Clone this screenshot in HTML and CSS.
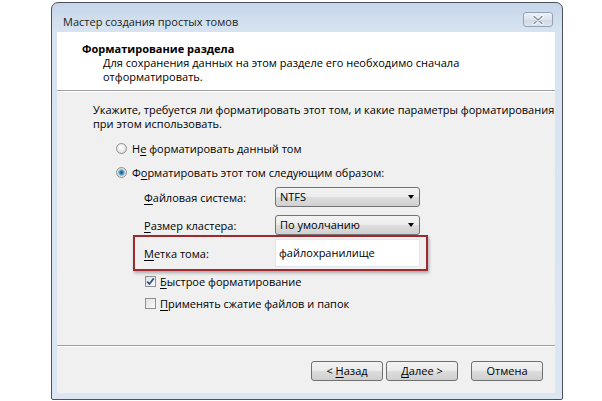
FILE: index.html
```html
<!DOCTYPE html>
<html lang="ru">
<head>
<meta charset="utf-8">
<title>Мастер создания простых томов</title>
<link rel="stylesheet" href="styles.css">
</head>
<body>
<div class="window">
  <div class="titlebar">
    <span class="title">Мастер создания простых томов</span>
    <span class="close">
      <svg width="14" height="10" viewBox="0 0 14 10"><path d="M3 1.5 L11 8.5 M11 1.5 L3 8.5" stroke="#fff" stroke-width="3.4" stroke-linecap="round"/><path d="M3 1.5 L11 8.5 M11 1.5 L3 8.5" stroke="#8391a3" stroke-width="1.6" stroke-linecap="round"/></svg>
    </span>
  </div>
  <div class="client">
    <div class="header">
      <div class="h-title">Форматирование раздела</div>
      <div class="h-desc">Для сохранения данных на этом разделе его необходимо сначала<br>отформатировать.</div>
    </div>
    <div class="content">
      <p class="intro">Укажите, требуется ли форматировать этот том, и какие параметры форматирования<br>при этом использовать.</p>
      <div class="opt-row first"><span class="radio"></span><span>Н<u>е</u> форматировать данный том</span></div>
      <div class="opt-row"><span class="radio checked"></span><span>Ф<u>о</u>рматировать этот том следующим образом:</span></div>
      <div class="form">
        <div class="frow">
          <span class="flabel"><u>Ф</u>айловая система:</span>
          <div class="combo">NTFS<span class="arrow"></span></div>
        </div>
        <div class="frow">
          <span class="flabel"><u>Р</u>азмер кластера:</span>
          <div class="combo">По умолчанию<span class="arrow"></span></div>
        </div>
        <div class="frow highlight">
          <span class="flabel"><u>М</u>етка тома:</span>
          <div class="input">файлохранилище</div>
        </div>
        <div class="chk-row first">
          <span class="check"><svg width="9" height="9" viewBox="0 0 9 9"><path d="M1.2 4.6 L3.4 7 L7.8 1.4" fill="none" stroke="#2c4f86" stroke-width="1.7"/></svg></span>
          <span><u>Б</u>ыстрое форматирование</span>
        </div>
        <div class="chk-row">
          <span class="check"></span>
          <span><u>П</u>рименять сжатие файлов и папок</span>
        </div>
      </div>
    </div>
    <div class="footer">
      <span class="btn">&lt; <u>Н</u>азад</span>
      <span class="btn"><u>Д</u>алее &gt;</span>
      <span class="btn cancel">Отмена</span>
    </div>
  </div>
</div>
</body>
</html>
```
FILE: styles.css
```css
* { box-sizing: border-box; }

body {
  margin: 0;
  background: #ffffff;
  font-family: "Open Sans", "Noto Sans", sans-serif;
  font-size: 11px;
  color: #000;
}

u { text-decoration: underline; text-underline-offset: 2px; text-decoration-thickness: 1px; }

.window {
  margin: 2px 0 0 51px;
  width: 512px;
  height: 398px;
  border: 1px solid #4b525b;
  border-radius: 7px 7px 2px 2px;
  background: linear-gradient(#c6d6e9, #d8e4f1 30px, #dbe6f2);
  padding: 0 7px 6px 5px;
  display: flex;
  flex-direction: column;
}

.titlebar {
  height: 29px;
  display: flex;
  justify-content: space-between;
  align-items: flex-start;
  padding: 0 2px 0 6px;
}

.title {
  margin-top: 11px;
  line-height: 15px;
  color: #1b1f24;
}

.close {
  margin-top: 9px;
  width: 30px;
  height: 15px;
  border: 1px solid #94a4b8;
  border-radius: 3px;
  background: linear-gradient(#eef2f7, #dbe3ed 50%, #cfd9e6 51%, #dbe4ee);
  display: flex;
  align-items: center;
  justify-content: center;
}

.client {
  flex: 1;
  display: flex;
  flex-direction: column;
  background: #f0f0f0;
}

.header {
  height: 59px;
  background: #fff;
  border-bottom: 1px solid #a0a0a0;
  padding: 9px 0 0 25px;
}

.h-title {
  font-weight: bold;
  line-height: 15px;
}

.h-desc {
  margin-left: 21px;
  line-height: 14px;
}

.content {
  flex: 1;
  border-top: 1px solid #fff;
  padding: 11px 0 0 36px;
}

.intro {
  margin: 0;
  line-height: 14px;
}

.opt-row {
  display: flex;
  align-items: center;
  height: 16px;
  margin-top: 8px;
}
.opt-row.first { margin-top: 9px; }

.radio {
  width: 11px;
  height: 11px;
  margin: 0 5px 0 23px;
  border-radius: 50%;
  border: 1px solid #8d9094;
  background: radial-gradient(circle at 45% 40%, #ffffff, #e6e6e6 60%, #cfcfcf);
}
.radio.checked {
  background: radial-gradient(circle at 50% 50%, #19507a 0, #2f7fb3 1.5px, #7fc0e2 3px, #dcdcdc 3.6px, #f2f2f2 100%);
}

.form {
  width: 276px;
  margin: 7px 0 0 51px;
}

.frow {
  display: flex;
  align-items: center;
  height: 20px;
}
.frow + .frow { margin-top: 8px; }

.flabel {
  width: 131px;
  flex: none;
}

.combo {
  position: relative;
  width: 145px;
  height: 20px;
  border: 1px solid #737373;
  border-radius: 3px;
  background: linear-gradient(#f3f3f3, #ececec 50%, #dddddd 51%, #d0d0d0);
  padding-left: 4px;
  line-height: 18px;
}

.arrow {
  position: absolute;
  right: 5px;
  top: 7px;
  width: 0;
  height: 0;
  border-left: 3.5px solid transparent;
  border-right: 3.5px solid transparent;
  border-top: 4px solid #000;
}

.frow.highlight {
  margin-top: 0;
  height: 36px;
  margin: 0 -8px 0 -11px;
  padding: 0 6px 0 9px;
  border: 2px solid #9e2a30;
  box-shadow: 1px 2px 3px rgba(0, 0, 0, 0.3);
}

.input {
  width: 145px;
  height: 28px;
  border: 1px solid #e2e6eb;
  background: #fff;
  padding-left: 3px;
  line-height: 25px;
  align-self: flex-start;
  margin-top: 2px;
}

.chk-row {
  display: flex;
  align-items: center;
  height: 15px;
  margin-top: 7px;
}
.chk-row.first { margin-top: 3px; }

.check {
  width: 11px;
  height: 11px;
  margin: 0 4px 0 1px;
  border: 1px solid #8d9094;
  background: linear-gradient(135deg, #e0e0e0, #fbfbfb);
  display: flex;
  align-items: center;
  justify-content: center;
}

.footer {
  height: 48px;
  border-top: 1px solid #a0a0a0;
  box-shadow: inset 0 1px 0 #fff;
  display: flex;
  justify-content: flex-end;
  align-items: flex-start;
  padding: 15px 12px 0 0;
}

.btn {
  width: 72px;
  height: 20px;
  border: 1px solid #707070;
  border-radius: 3px;
  background: linear-gradient(#f2f2f2, #ebebeb 50%, #dddddd 51%, #cfcfcf);
  text-align: center;
  line-height: 18px;
  margin-left: 3px;
}
.btn.cancel { margin-left: 13px; }
```
